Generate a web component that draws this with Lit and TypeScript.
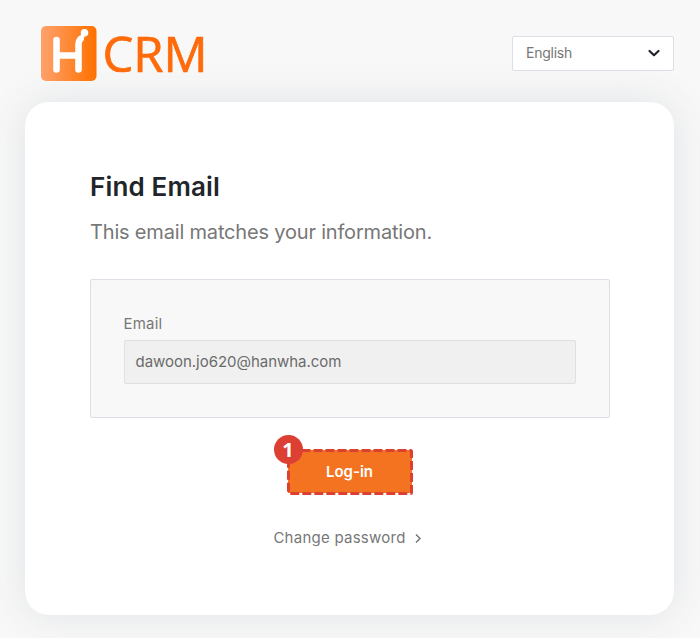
import { LitElement, html, css } from "lit";
import { customElement } from "lit/decorators.js";

@customElement("app-root")
export class AppRoot extends LitElement {
  static styles = css`
    :host { display: block; height: 638px; box-sizing: border-box; overflow: hidden; background: #f8f8f8; font-family: Inter, "Noto Sans", sans-serif; color: #777; }
    * { box-sizing: border-box; }
    header { height: 102px; padding: 26px 26px 0 41px; display: flex; justify-content: space-between; }
    .logo { display: flex; height: 56px; }
    .mark { width: 56px; height: 55px; }
    .crm { margin-left: 5.500px; font: 400 49px/55px "Open Sans", sans-serif; letter-spacing: 0; color: #ff6a0a; -webkit-text-stroke: 0.7px #ff6a0a; }
    .select { margin-top: 10px; width: 162px; height: 35px; border: 1px solid #dce0e6; border-radius: 2px; background: #fff; display: flex; align-items: center; justify-content: space-between; padding: 0 12px 2px 13px; font-size: 14px; letter-spacing: -0.25px; }
    .card { margin: 0 26px 0 25px; height: 513px; border-radius: 24px; background: #fff; box-shadow: 0 0 40px rgba(60, 70, 100, 0.12); padding: 69px 65px 0; display: flex; flex-direction: column; align-items: center; }
    h1 { margin: 0; align-self: flex-start; font-size: 26px; line-height: 32px; font-weight: 600; letter-spacing: 0.15px; color: #212529; white-space: nowrap; }
    .sub { align-self: flex-start; margin-top: 14px; font-size: 20px; line-height: 30px; letter-spacing: -0.18px; white-space: nowrap; }
    .panel { width: 520px; height: 139px; margin-top: 32px; padding: 33px 33px 0; border: 1px solid #dce0e6; border-radius: 2px; background: #f8f8f8; }
    label { display: block; font-size: 15px; line-height: 22px; letter-spacing: 0.2px; }
    .field { margin-top: 5px; height: 44px; border: 1px solid #dce0e3; border-radius: 2px; background: #f0f0f0; padding: 0 11px; font-size: 15px; line-height: 42px; letter-spacing: -0.03px; color: #6b6b6b; }
    .button { position: relative; width: 126px; height: 46px; margin-top: 31px; display: flex; align-items: center; justify-content: center; color: #fff; font-weight: 600; font-size: 15px; letter-spacing: 0; }
    .frame { position: absolute; inset: 0; }
    .caption { position: relative; top: -1px; }
    .badge { position: absolute; left: -13px; top: -14px; width: 29px; height: 29px; border-radius: 50%; background: #db4032; text-align: center; font: 700 20px/30px "Noto Sans", sans-serif; }
    .link { margin-top: 31px; display: flex; align-items: center; gap: 8px; font-size: 15px; line-height: 24px; letter-spacing: 0.25px; white-space: nowrap; padding-right: 4px; }
  `;
  render() {
    return html`
      <header>
        <div class="logo">
          <svg class="mark" viewBox="0 0 56 55">
            <defs><linearGradient id="g"><stop stop-color="#ffa16c" /><stop offset="1" stop-color="#ff7100" /></linearGradient></defs>
            <rect width="55.5" height="55" rx="5" fill="url(#g)" />
            <path d="M15.500 14V43.500M15.500 29.500H37M37.500 43.500V18Q37.500 15 39.500 13" fill="none" stroke="#fff" stroke-width="6.600" stroke-linecap="round" />
            <path d="M38.500 14.500L43 8" stroke="#fff" stroke-width="4" />
            <circle cx="43.500" cy="6.800" r="3.800" fill="#fff" />
          </svg>
          <span class="crm">CRM</span>
        </div>
        <div class="select"><span>English</span>
          <svg width="14" height="10" viewBox="0 0 14 10"><path d="M2.500 3L7 7.300L11.500 3" fill="none" stroke="#20242a" stroke-width="2.200" stroke-linecap="round" stroke-linejoin="round" /></svg>
        </div>
      </header>
      <main class="card">
        <h1>Find Email</h1>
        <div class="sub">This email matches your information.</div>
        <section class="panel"><label>Email</label><div class="field">dawoon.jo620@hanwha.com</div></section>
        <div class="button">
          <svg class="frame" width="126" height="46">
            <rect x="1" y="1" width="124" height="43" fill="#f47321" />
            <rect x="1.500" y="1.500" width="123" height="43" rx="1" fill="none" stroke="#db4032" stroke-width="3" stroke-dasharray="9 3" />
          </svg>
          <span class="caption">Log-in</span><span class="badge">1</span>
        </div>
        <div class="link"><span>Change password</span>
          <svg width="8" height="10" viewBox="0 0 8 10"><path d="M2 1.500L6 5.500L2 9.500" fill="none" stroke="#777" stroke-width="1.500" /></svg>
        </div>
      </main>`;
  }
}
